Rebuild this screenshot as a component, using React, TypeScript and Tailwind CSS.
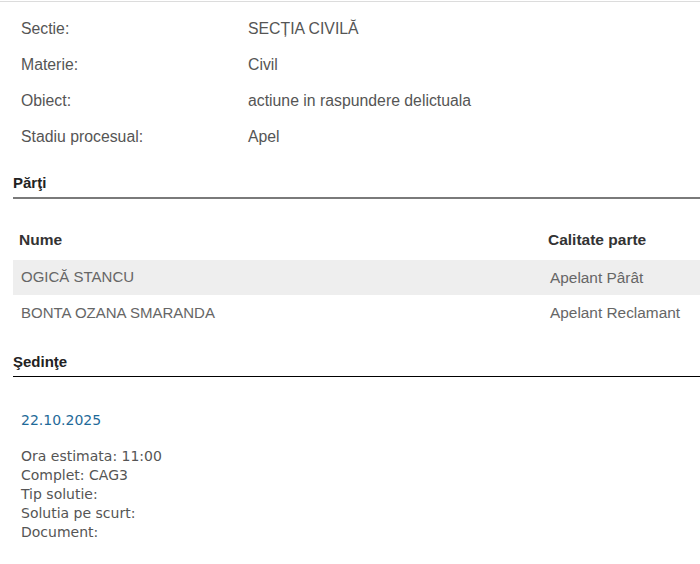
import React from 'react';

const info = [
  { label: 'Sectie:', value: 'SECȚIA CIVILĂ' },
  { label: 'Materie:', value: 'Civil' },
  { label: 'Obiect:', value: 'actiune in raspundere delictuala' },
  { label: 'Stadiu procesual:', value: 'Apel' },
];

const parti = [
  { nume: 'OGICĂ STANCU', calitate: 'Apelant Pârât' },
  { nume: 'BONTA OZANA SMARANDA', calitate: 'Apelant Reclamant' },
];

const sedinta = ['Ora estimata: 11:00', 'Complet: CAG3', 'Tip solutie:', 'Solutia pe scurt:', 'Document:'];

export default function App() {
  return (
    <div className="w-[700px] h-[564px] bg-white overflow-hidden font-['Liberation_Sans',Arial,sans-serif]">
      <div className="mt-px h-px bg-[#dcdcdc]" />

      {/* Detalii dosar */}
      <div className="pt-[9px]">
        {info.map((row) => (
          <div key={row.label} className="flex h-9 items-center text-[15.8px] text-[#555]">
            <div className="w-[248px] pl-[21px]">{row.label}</div>
            <div>{row.value}</div>
          </div>
        ))}
      </div>

      {/* Parti */}
      <div className="ml-[13px] mt-[18px] border-b-2 border-[#7a7a7a] pb-1">
        <h3 className="text-[15px] font-bold leading-5 text-[#222]">Părţi</h3>
      </div>

      <div className="ml-[13px]">
        <div className="flex pt-[31px] pb-[10px] text-[15.5px] font-bold leading-5 text-[#333]">
          <div className="w-[535px] pl-[6px]">Nume</div>
          <div>Calitate parte</div>
        </div>
        {parti.map((p, i) => (
          <div
            key={p.nume}
            className={`flex items-center text-[15px] text-[#666] ${i === 0 ? 'h-[35px] bg-[#eeeeee]' : 'h-9'}`}
          >
            <div className="w-[535px] pl-2">{p.nume}</div>
            <div className="pl-[2px] text-[15.4px]">{p.calitate}</div>
          </div>
        ))}
      </div>

      {/* Sedinte */}
      <div className="ml-[13px] mt-[21px] border-b border-black pb-1">
        <h3 className="text-[15px] font-bold leading-5 text-[#222]">Şedinţe</h3>
      </div>

      <div className="pl-[21px] font-['DejaVu_Sans',Verdana,sans-serif] text-[14px] leading-[19px]">
        <div className="mt-[34px] text-[#1f6a99]">22.10.2025</div>
        <div className="mt-[17px] text-[#555]">
          {sedinta.map((l) => (
            <div key={l}>{l}</div>
          ))}
        </div>
      </div>
    </div>
  );
}
